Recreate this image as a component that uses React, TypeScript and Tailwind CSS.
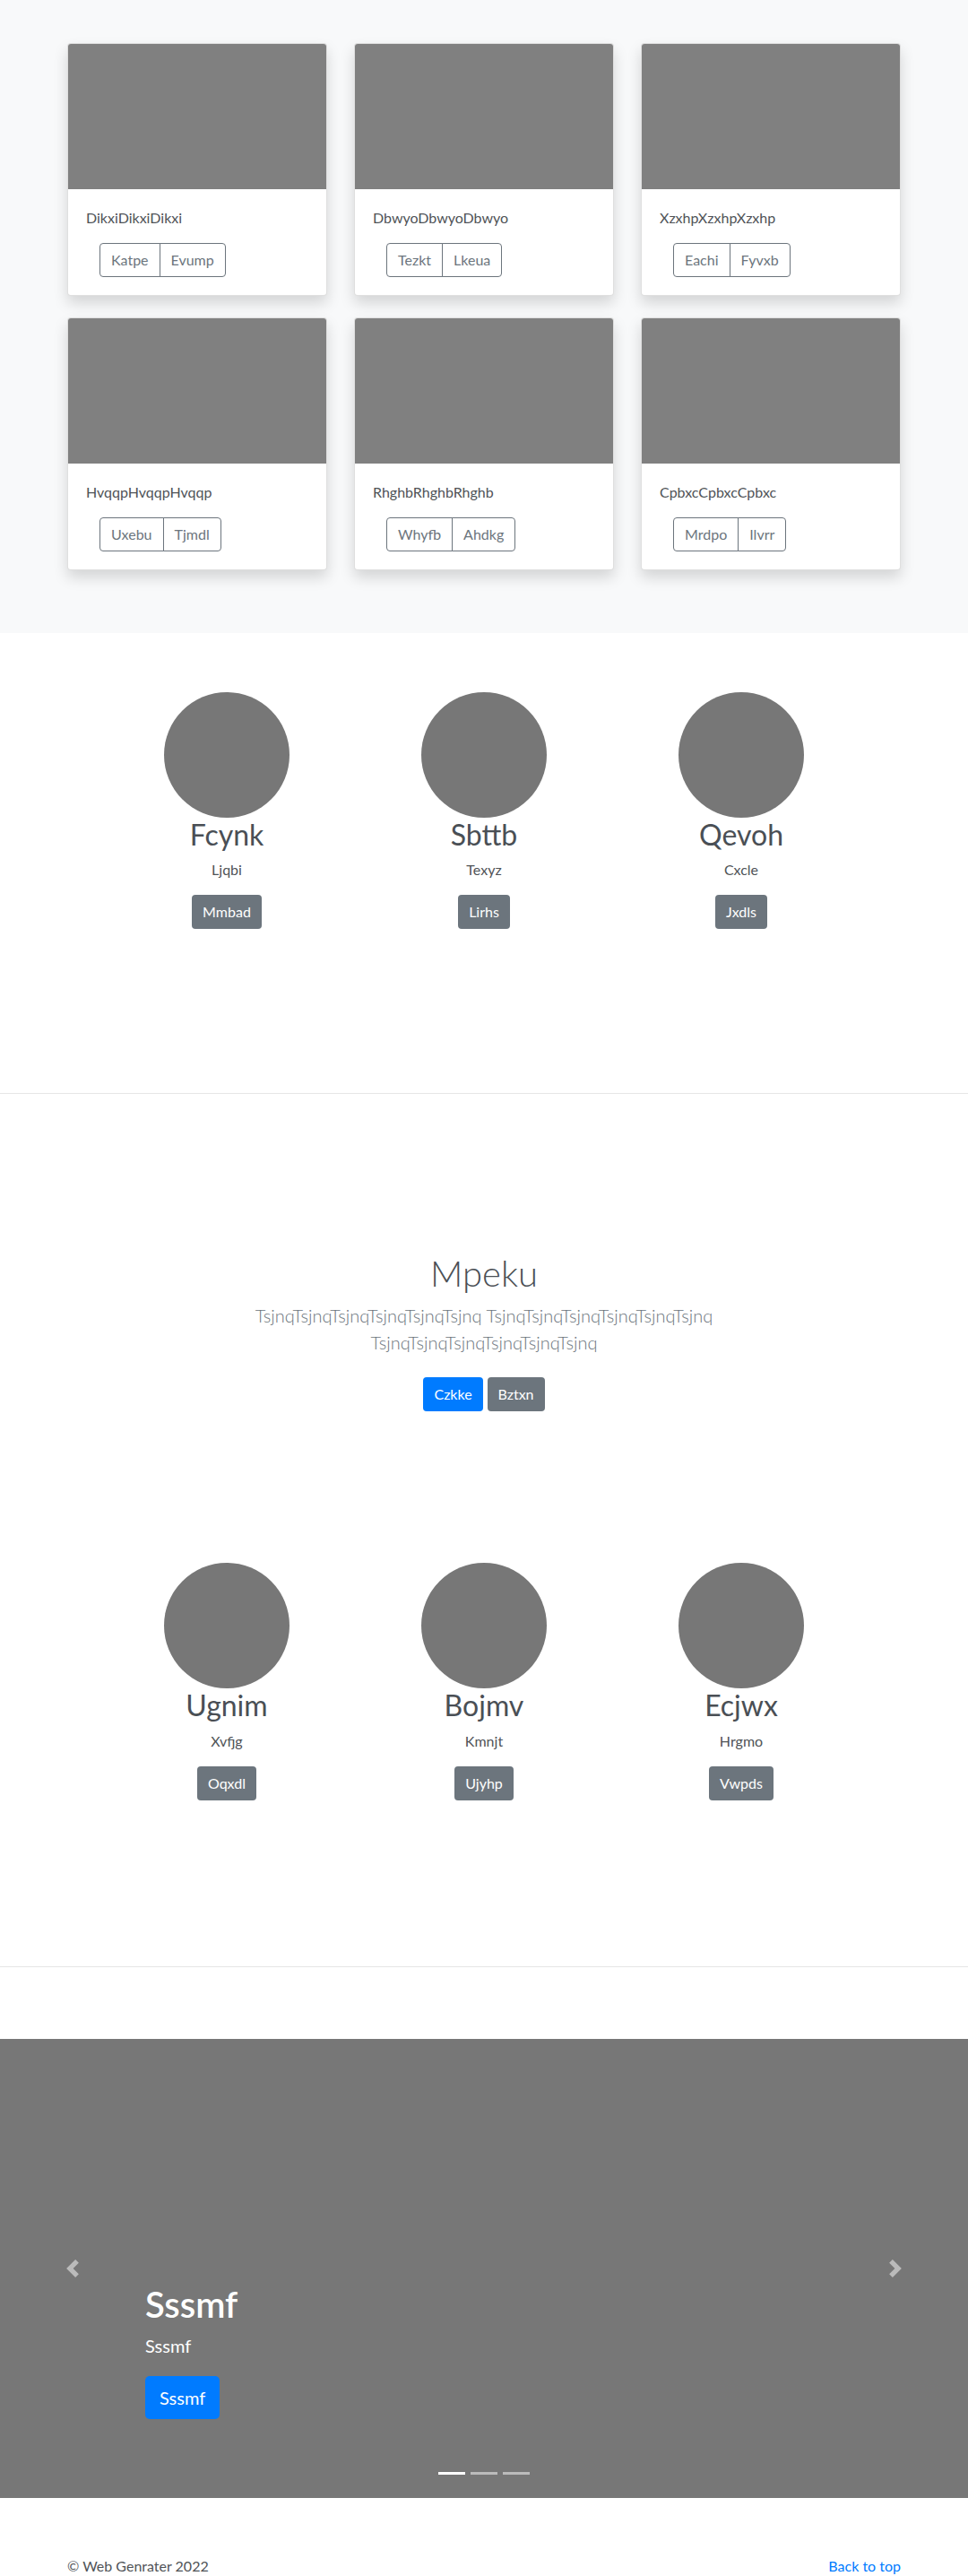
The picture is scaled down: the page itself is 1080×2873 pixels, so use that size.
import React from "react";

const cards = [
  { title: "DikxiDikxiDikxi", a: "Katpe", b: "Evump" },
  { title: "DbwyoDbwyoDbwyo", a: "Tezkt", b: "Lkeua" },
  { title: "XzxhpXzxhpXzxhp", a: "Eachi", b: "Fyvxb" },
  { title: "HvqqpHvqqpHvqqp", a: "Uxebu", b: "Tjmdl" },
  { title: "RhghbRhghbRhghb", a: "Whyfb", b: "Ahdkg" },
  { title: "CpbxcCpbxcCpbxc", a: "Mrdpo", b: "Ilvrr" },
];

const teamOne = [
  { name: "Fcynk", role: "Ljqbi", btn: "Mmbad" },
  { name: "Sbttb", role: "Texyz", btn: "Lirhs" },
  { name: "Qevoh", role: "Cxcle", btn: "Jxdls" },
];

const teamTwo = [
  { name: "Ugnim", role: "Xvfjg", btn: "Oqxdl" },
  { name: "Bojmv", role: "Kmnjt", btn: "Ujyhp" },
  { name: "Ecjwx", role: "Hrgmo", btn: "Vwpds" },
];

function Card({ title, a, b }: { title: string; a: string; b: string }) {
  return (
    <div className="bg-white border border-[rgba(0,0,0,0.125)] rounded-[4px] overflow-hidden shadow-[0_8px_16px_rgba(0,0,0,0.15)]">
      <div className="h-[162px] bg-[#808080]" />
      <div className="p-5">
        <p className="text-base leading-6 text-[#4f5357] mb-4">{title}</p>
        <div className="inline-flex ml-[15px]">
          <button className="border border-[#6c757d] text-[#6c757d] text-base leading-6 px-3 py-[6px] rounded-l-[4px]">
            {a}
          </button>
          <button className="border border-[#6c757d] -ml-px text-[#6c757d] text-base leading-6 px-3 py-[6px] rounded-r-[4px]">
            {b}
          </button>
        </div>
      </div>
    </div>
  );
}

function Team({
  people,
  last,
}: {
  people: { name: string; role: string; btn: string }[];
  last?: boolean;
}) {
  return (
    <section className={last ? "pt-[66px] pb-[185px]" : "pt-[66px] pb-[183px]"}>
      <div className="w-[861px] mx-auto grid grid-cols-3">
        {people.map((p) => (
          <div key={p.name} className="flex flex-col items-center text-center">
            <div className="w-[140px] h-[140px] rounded-full bg-[#777777]" />
            <h2 className="text-[32px] leading-[38.4px] font-normal text-[#4a4f55] mb-2">
              {p.name}
            </h2>
            <p className="text-base leading-6 text-[#4f5357] mb-4">{p.role}</p>
            <button className="bg-[#6c757d] text-white text-base leading-6 px-3 py-[7px] rounded-[4px]">
              {p.btn}
            </button>
          </div>
        ))}
      </div>
    </section>
  );
}

function Chevron({ dir }: { dir: "left" | "right" }) {
  return (
    <svg width="20" height="20" viewBox="0 0 8 8" fill="#fff">
      {dir === "left" ? (
        <path d="M5.25 0l-4 4 4 4 1.5-1.5L4.25 4l2.5-2.5L5.25 0z" />
      ) : (
        <path d="M2.75 0l-1.5 1.5L3.75 4l-2.5 2.5L2.75 8l4-4-4-4z" />
      )}
    </svg>
  );
}

export default function App() {
  return (
    <div className="font-[Lato,'Liberation_Sans',sans-serif] text-[#212529] bg-white">
      {/* album */}
      <section className="bg-[#f8f9fa] pt-12 pb-[70px]">
        <div className="w-[960px] mx-auto px-[15px] grid grid-cols-3 gap-x-[30px] gap-y-6">
          {cards.map((c) => (
            <Card key={c.title} {...c} />
          ))}
        </div>
      </section>

      <Team people={teamOne} />
      <hr className="border-0 border-t border-[#e6e6e6]" />

      {/* jumbotron */}
      <section className="pt-[176px] pb-[103px] text-center">
        <h1 className="text-[40px] leading-[48px] font-light text-[#4a4f55] mb-2">Mpeku</h1>
        <p className="max-w-[610px] mx-auto text-[20px] leading-[30px] font-light text-[#6c757d] mb-4">
          TsjnqTsjnqTsjnqTsjnqTsjnqTsjnq TsjnqTsjnqTsjnqTsjnqTsjnqTsjnq TsjnqTsjnqTsjnqTsjnqTsjnqTsjnq
        </p>
        <div className="flex justify-center gap-[5px] pt-2">
          <button className="bg-[#007bff] text-white text-base leading-6 px-3 py-[7px] rounded-[4px]">
            Czkke
          </button>
          <button className="bg-[#6c757d] text-white text-base leading-6 px-3 py-[7px] rounded-[4px]">
            Bztxn
          </button>
        </div>
      </section>

      <Team people={teamTwo} last />
      <hr className="border-0 border-t border-[#e6e6e6]" />

      {/* carousel */}
      <div className="relative mt-20 h-[512px] bg-[#777777]">
        <div className="absolute left-0 top-0 bottom-0 w-[15%] flex items-center justify-center opacity-50">
          <Chevron dir="left" />
        </div>
        <div className="absolute right-0 top-0 bottom-0 w-[15%] flex items-center justify-center opacity-50">
          <Chevron dir="right" />
        </div>
        <div className="absolute left-[15%] right-[15%] bottom-12 py-5 text-left text-white">
          <h1 className="text-[40px] leading-[48px] font-semibold mb-2">Sssmf</h1>
          <p className="text-[20px] leading-[28px] mb-5">Sssmf</p>
          <div className="pb-5">
            <button className="bg-[#007bff] text-white text-[20px] leading-[30px] px-4 py-[9px] rounded-[5px]">
              Sssmf
            </button>
          </div>
        </div>
        <div className="absolute left-0 right-0 bottom-[26px] flex justify-center gap-[6px]">
          <span className="w-[30px] h-[3px] bg-white" />
          <span className="w-[30px] h-[3px] bg-white opacity-50" />
          <span className="w-[30px] h-[3px] bg-white opacity-50" />
        </div>
      </div>

      {/* footer */}
      <footer className="w-[960px] mx-auto px-[15px] mt-16 flex justify-between text-base leading-6 pb-4">
        <p className="text-[#4f5357]">© Web Genrater 2022</p>
        <a href="#" className="text-[#007bff]">
          Back to top
        </a>
      </footer>
    </div>
  );
}
